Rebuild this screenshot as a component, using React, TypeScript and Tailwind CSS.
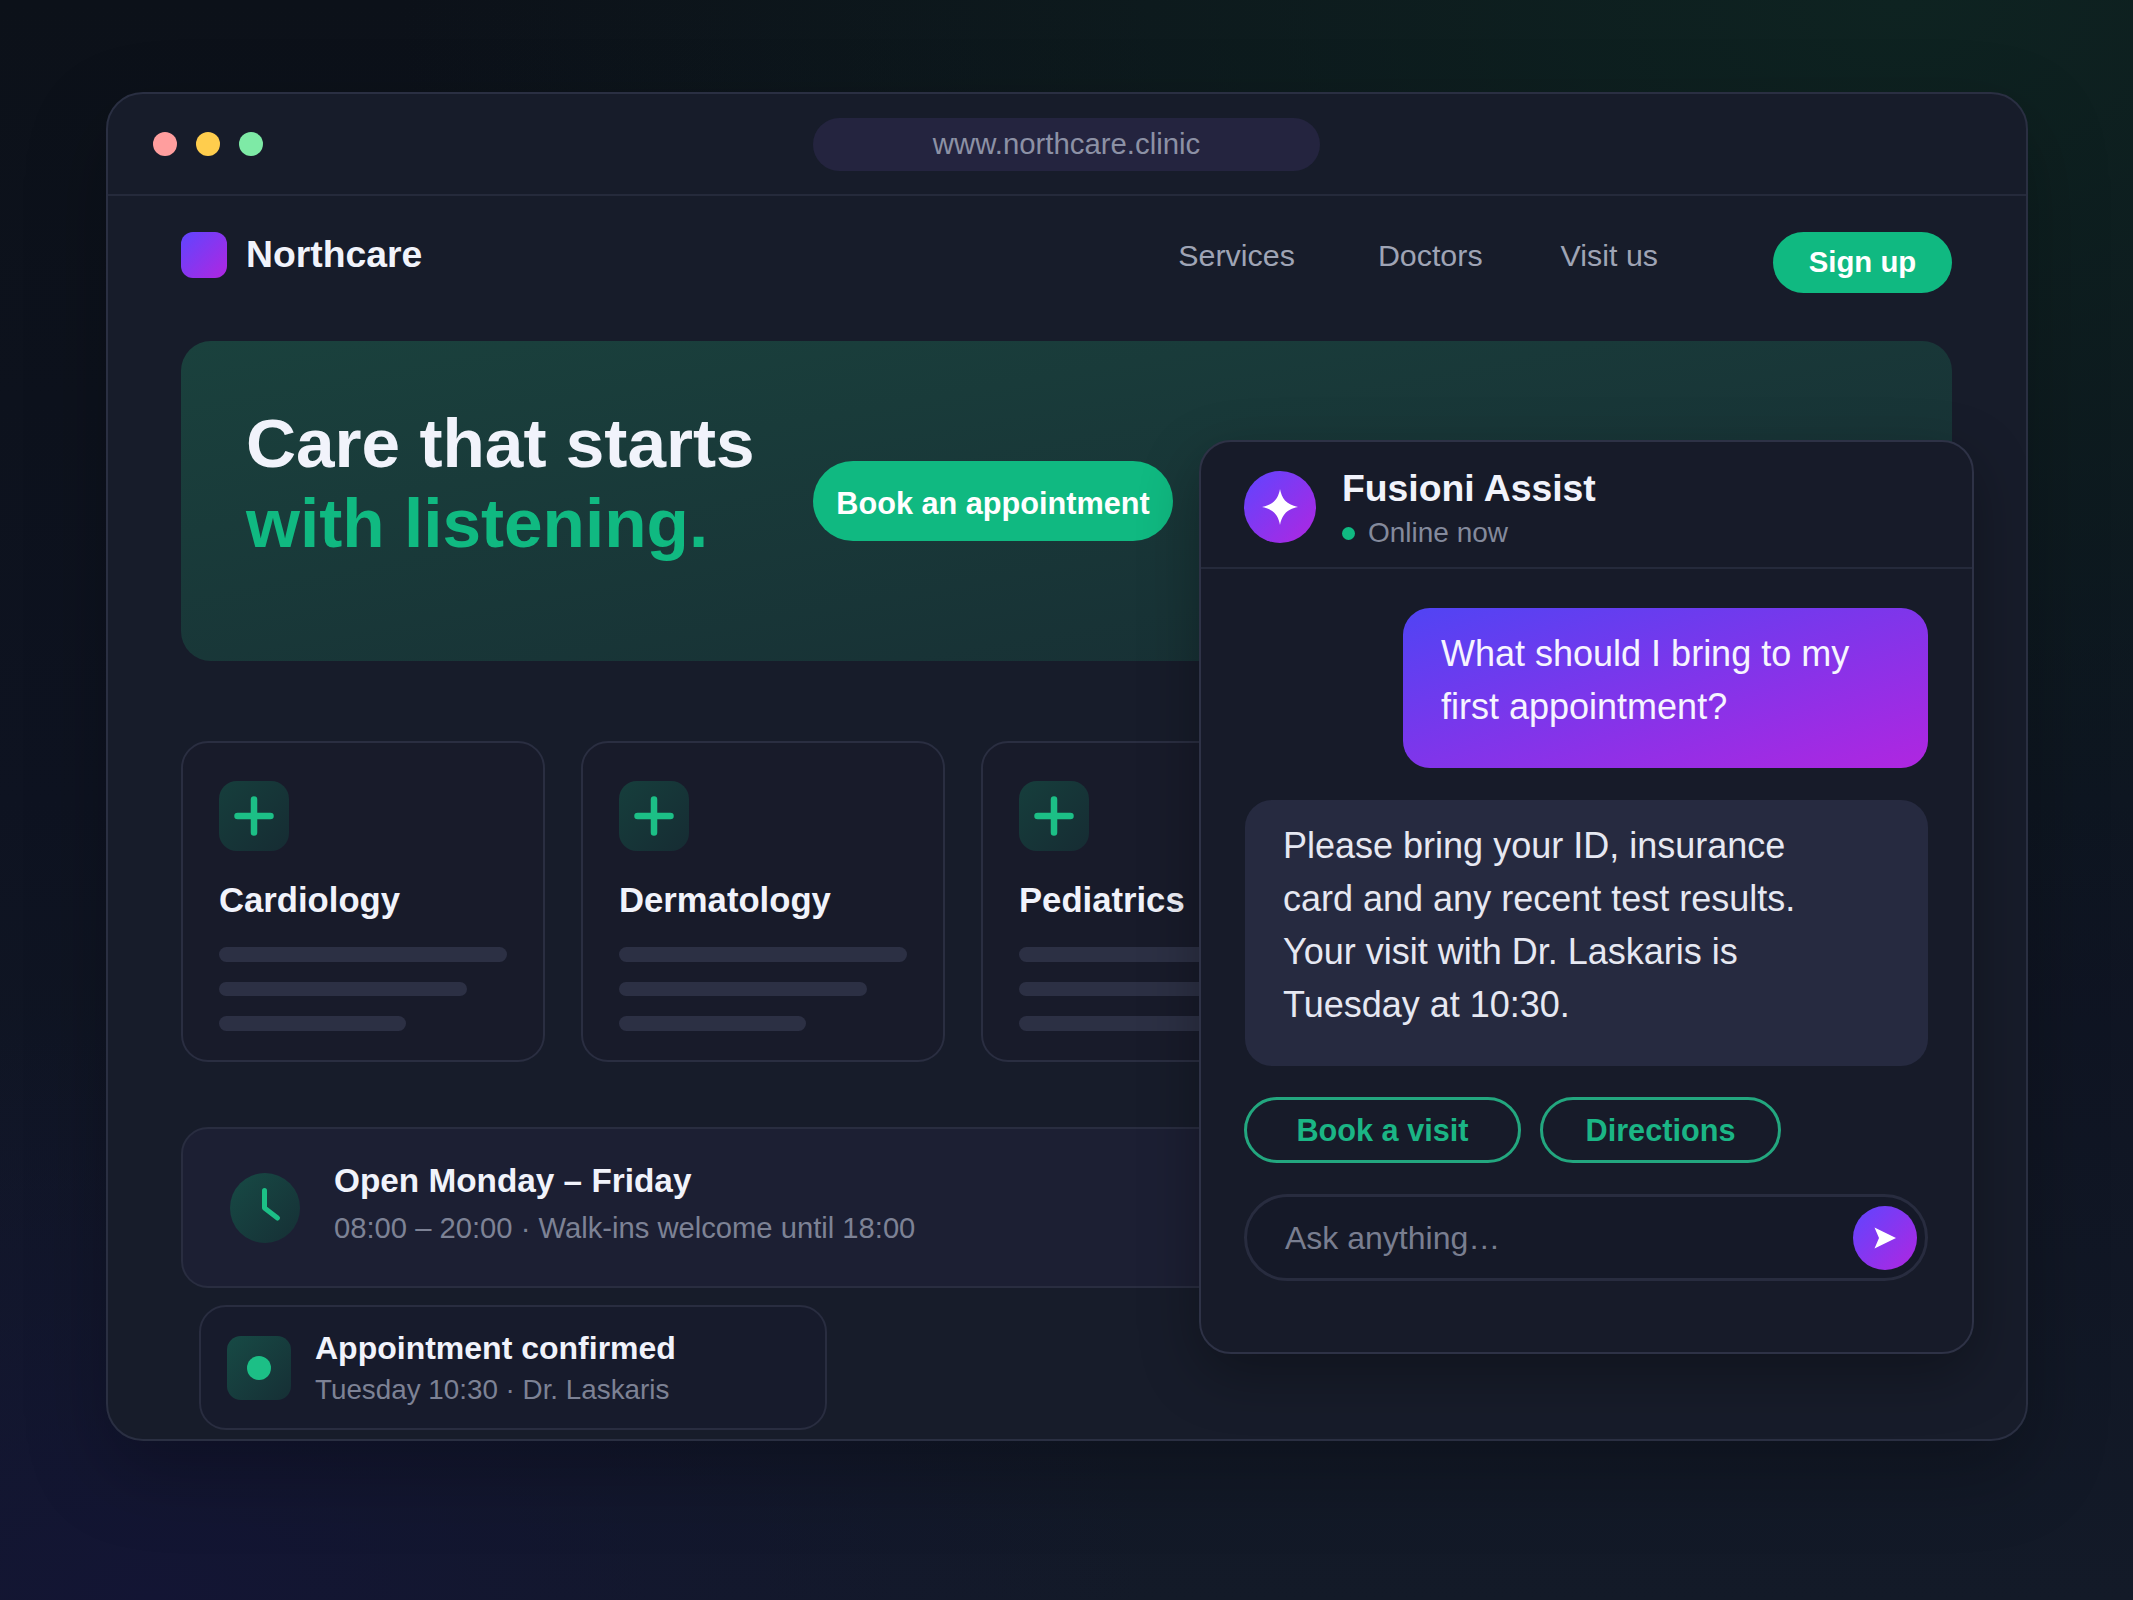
import { ReactNode } from "react";

const departments = ["Cardiology", "Dermatology", "Pediatrics"];

const PlusIcon = () => (
  <svg viewBox="0 0 40 40" className="h-[40px] w-[40px]" fill="none" stroke="#1cbf86" strokeWidth="6.5" strokeLinecap="round">
    <path d="M20 3.5v33M3.5 20h33" />
  </svg>
);

const ClockHands = () => (
  <svg viewBox="0 0 68 70" className="h-[70px] w-[68px]" fill="none" stroke="#1cbf86" strokeWidth="5" strokeLinecap="round" strokeLinejoin="round">
    <path d="M33.5 17.5V35L46.5 45" />
  </svg>
);

const Sparkle = () => (
  <svg viewBox="0 0 36 36" className="h-[36px] w-[36px]" fill="#ffffff">
    <path d="M18 0C19.8 9 23.5 15.4 36 18C23.5 20.6 19.8 27 18 36C16.2 27 12.5 20.6 0 18C12.5 15.4 16.2 9 18 0Z" />
  </svg>
);

const SendArrow = () => (
  <svg viewBox="0 0 24 24" className="h-[24px] w-[24px]" fill="#ffffff">
    <path d="M1.5 1.5L23 12L1.5 22.5L6 12Z" />
  </svg>
);

const Card = ({ title }: { title: string }) => (
  <div className="flex h-[321px] w-[364px] shrink-0 flex-col rounded-[27px] border-2 border-[#2a2e41] bg-[#181b2a] px-[36px] pt-[38px]">
    <div className="flex h-[70px] w-[70px] items-center justify-center rounded-[18px] bg-linear-to-br/srgb from-[#163e3c] to-[#162c33]">
      <PlusIcon />
    </div>
    <h3 className="mt-[27px] text-[34.67px] leading-[44px] font-bold text-[#f1f3fb]">{title}</h3>
    <div className="mt-[25px] flex flex-col gap-[20px]">
      <div className="h-[14.67px] w-[288px] rounded-full bg-[#2c3044]" />
      <div className="h-[14.67px] w-[248px] rounded-full bg-[#2c3044]" />
      <div className="h-[14.67px] w-[187px] rounded-full bg-[#2c3044]" />
    </div>
  </div>
);

const NavLink = ({ children }: { children: ReactNode }) => (
  <a className="text-[30.4px] leading-[46px] text-[#9fa4b5]">{children}</a>
);

export default function App() {
  return (
    <div className="h-[1600px] w-[2133px] overflow-hidden bg-[radial-gradient(ellipse_1500px_1000px_at_1900px_0px,#0e2321_0%,transparent_100%),radial-gradient(ellipse_1000px_600px_at_150px_1600px,#131534_0%,transparent_100%),linear-gradient(180deg,#0c1119_0%,#0e1321_50%,#131a28_100%)] pt-[92px] pl-[106px] font-['Liberation_Sans',Arial,sans-serif]">
      <div className="relative h-[1349px] w-[1922px] overflow-hidden rounded-[37px] border-2 border-[#2a2f42] bg-[#171c2a] shadow-[0_30px_80px_rgba(0,0,0,0.25)]">
        {/* title bar */}
        <div className="grid h-[102px] grid-cols-[1fr_507px_1fr] items-center border-b-2 border-[#252a3b] pl-[45px]">
          <div className="flex gap-[19px]">
            <span className="h-[24px] w-[24px] rounded-full bg-[#ff9e9e]" />
            <span className="h-[24px] w-[24px] rounded-full bg-[#ffcd4d]" />
            <span className="h-[24px] w-[24px] rounded-full bg-[#7eeaa6]" />
          </div>
          <div className="-ml-[23px] flex h-[53px] w-[507px] items-center justify-center rounded-full bg-[#24243f] text-[29.33px] text-[#8c91a5]">
            www.northcare.clinic
          </div>
        </div>

        <div className="pt-[36px] pr-[74px] pl-[73px]">
          {/* nav */}
          <div className="flex h-[61px] items-start">
            <div className="h-[46px] w-[46px] rounded-[12px] bg-linear-to-br/srgb from-[#5f45ff] to-[#b026e0]" />
            <span className="ml-[19px] text-[37.33px] leading-[44px] font-bold text-[#f1f3fb]">Northcare</span>
            <div className="ml-auto flex">
              <NavLink>Services</NavLink>
              <span className="w-[83px]" />
              <NavLink>Doctors</NavLink>
              <span className="w-[78px]" />
              <NavLink>Visit us</NavLink>
            </div>
            <button className="ml-[115px] h-[61px] w-[179px] rounded-full bg-[#10b981] pb-[2px] text-[29.33px] font-bold text-white">Sign up</button>
          </div>

          {/* hero */}
          <div className="mt-[48px] flex h-[320px] w-full items-start rounded-[30px] bg-linear-to-br/srgb from-[#1a413d] to-[#172d33] pt-[62px] pl-[65px]">
            <h1 className="w-[567px] shrink-0 text-[69.33px] leading-[80px] font-bold text-[#f1f3fb]">
              Care that starts
              <br />
              <span className="text-[#10b981]">with listening.</span>
            </h1>
            <button className="mt-[58px] h-[80px] w-[360px] rounded-full bg-[#10b981] pt-[3px] text-[30.67px] font-bold text-white">Book an appointment</button>
          </div>

          {/* department cards */}
          <div className="mt-[80px] flex gap-[36px]">
            {departments.map((d) => (
              <Card key={d} title={d} />
            ))}
          </div>

          {/* opening hours */}
          <div className="mt-[65px] flex h-[161px] w-full items-start rounded-[27px] border-2 border-[#292d40] bg-[#1c1f33] pt-[44px] pl-[47px]">
            <div className="flex h-[70px] w-[70px] items-center justify-center rounded-full bg-linear-to-br/srgb from-[#174a45] to-[#162f35]">
              <ClockHands />
            </div>
            <div className="-mt-[15px] ml-[34px]">
              <div className="text-[33.33px] leading-[46px] font-bold text-[#f1f3fb]">Open Monday – Friday</div>
              <div className="mt-[2px] text-[29.2px] leading-[44px] text-[#7d8295]">08:00 – 20:00 · Walk-ins welcome until 18:00</div>
            </div>
          </div>

          {/* confirmation */}
          <div className="mt-[17px] ml-[18px] flex h-[125px] w-[628px] items-center rounded-[27px] border-2 border-[#292d40] bg-[#171b2c] pl-[26px]">
            <div className="flex h-[64px] w-[64px] items-center justify-center rounded-[14px] bg-linear-to-br/srgb from-[#174a45] to-[#162f35]">
              <span className="h-[24px] w-[24px] rounded-full bg-[#1cbf86]" />
            </div>
            <div className="mt-[2px] ml-[24px]">
              <div className="text-[32px] leading-[42px] font-bold text-[#f1f3fb]">Appointment confirmed</div>
              <div className="text-[27.8px] leading-[41px] text-[#7d8295]">Tuesday 10:30 · Dr. Laskaris</div>
            </div>
          </div>
        </div>

        {/* chat panel overlays the page */}
        <div className="absolute top-[346px] left-[1091px] h-[914px] w-[775px] overflow-hidden rounded-[32px] border-2 border-[#2e3246] bg-[#171b29] shadow-[0_20px_60px_rgba(0,0,0,0.3)]">
          <div className="flex h-[127px] items-start border-b-2 border-[#252a3b] pt-[29px] pl-[43px]">
            <div className="flex h-[72px] w-[72px] items-center justify-center rounded-full bg-linear-to-br/srgb from-[#5f45ff] to-[#b026e0]">
              <Sparkle />
            </div>
            <div className="-mt-[8px] ml-[26px]">
              <div className="text-[37.33px] leading-[50px] font-bold text-[#f1f3fb]">Fusioni Assist</div>
              <div className="mt-[1px] flex items-center text-[28px] leading-[38px] text-[#848a9c]">
                <span className="mr-[13px] h-[13px] w-[13px] rounded-full bg-[#10b981]" />
                Online now
              </div>
            </div>
          </div>

          <div className="pt-[39px] pr-[44px] pl-[43px]">
            <div className="ml-auto h-[160px] w-[525px] rounded-[27px] bg-linear-to-br/srgb from-[#5044f4] to-[#b026e0] px-[38px] pt-[19px] text-[36px] leading-[53px] text-[#f6f4ff]">
              What should I bring to my first appointment?
            </div>
            <div className="mt-[32px] ml-[1px] h-[266px] w-[683px] rounded-[27px] bg-[#262a40] pt-[19px] pr-[100px] pl-[38px] text-[36px] leading-[53px] text-[#e6e8f2]">
              Please bring your ID, insurance card and any recent test results. Your visit with Dr. Laskaris is Tuesday at 10:30.
            </div>
            <div className="mt-[31px] flex gap-[19px]">
              <button className="h-[66px] w-[277px] rounded-full border-[3px] border-[#23a77f] text-[30.67px] font-bold text-[#1bb585]">Book a visit</button>
              <button className="h-[66px] w-[241px] rounded-full border-[3px] border-[#23a77f] text-[30.67px] font-bold text-[#1bb585]">Directions</button>
            </div>
            <div className="mt-[31px] flex h-[87px] w-[684px] items-center rounded-full border-[3px] border-[#282c3f] bg-[#151928] pr-[8px] pl-[38px]">
              <span className="text-[32px] text-[#797e90]">Ask anything…</span>
              <span className="ml-auto flex h-[64px] w-[64px] items-center justify-center rounded-full bg-linear-to-br/srgb from-[#5f45ff] to-[#b026e0]">
                <SendArrow />
              </span>
            </div>
          </div>
        </div>
      </div>
    </div>
  );
}
